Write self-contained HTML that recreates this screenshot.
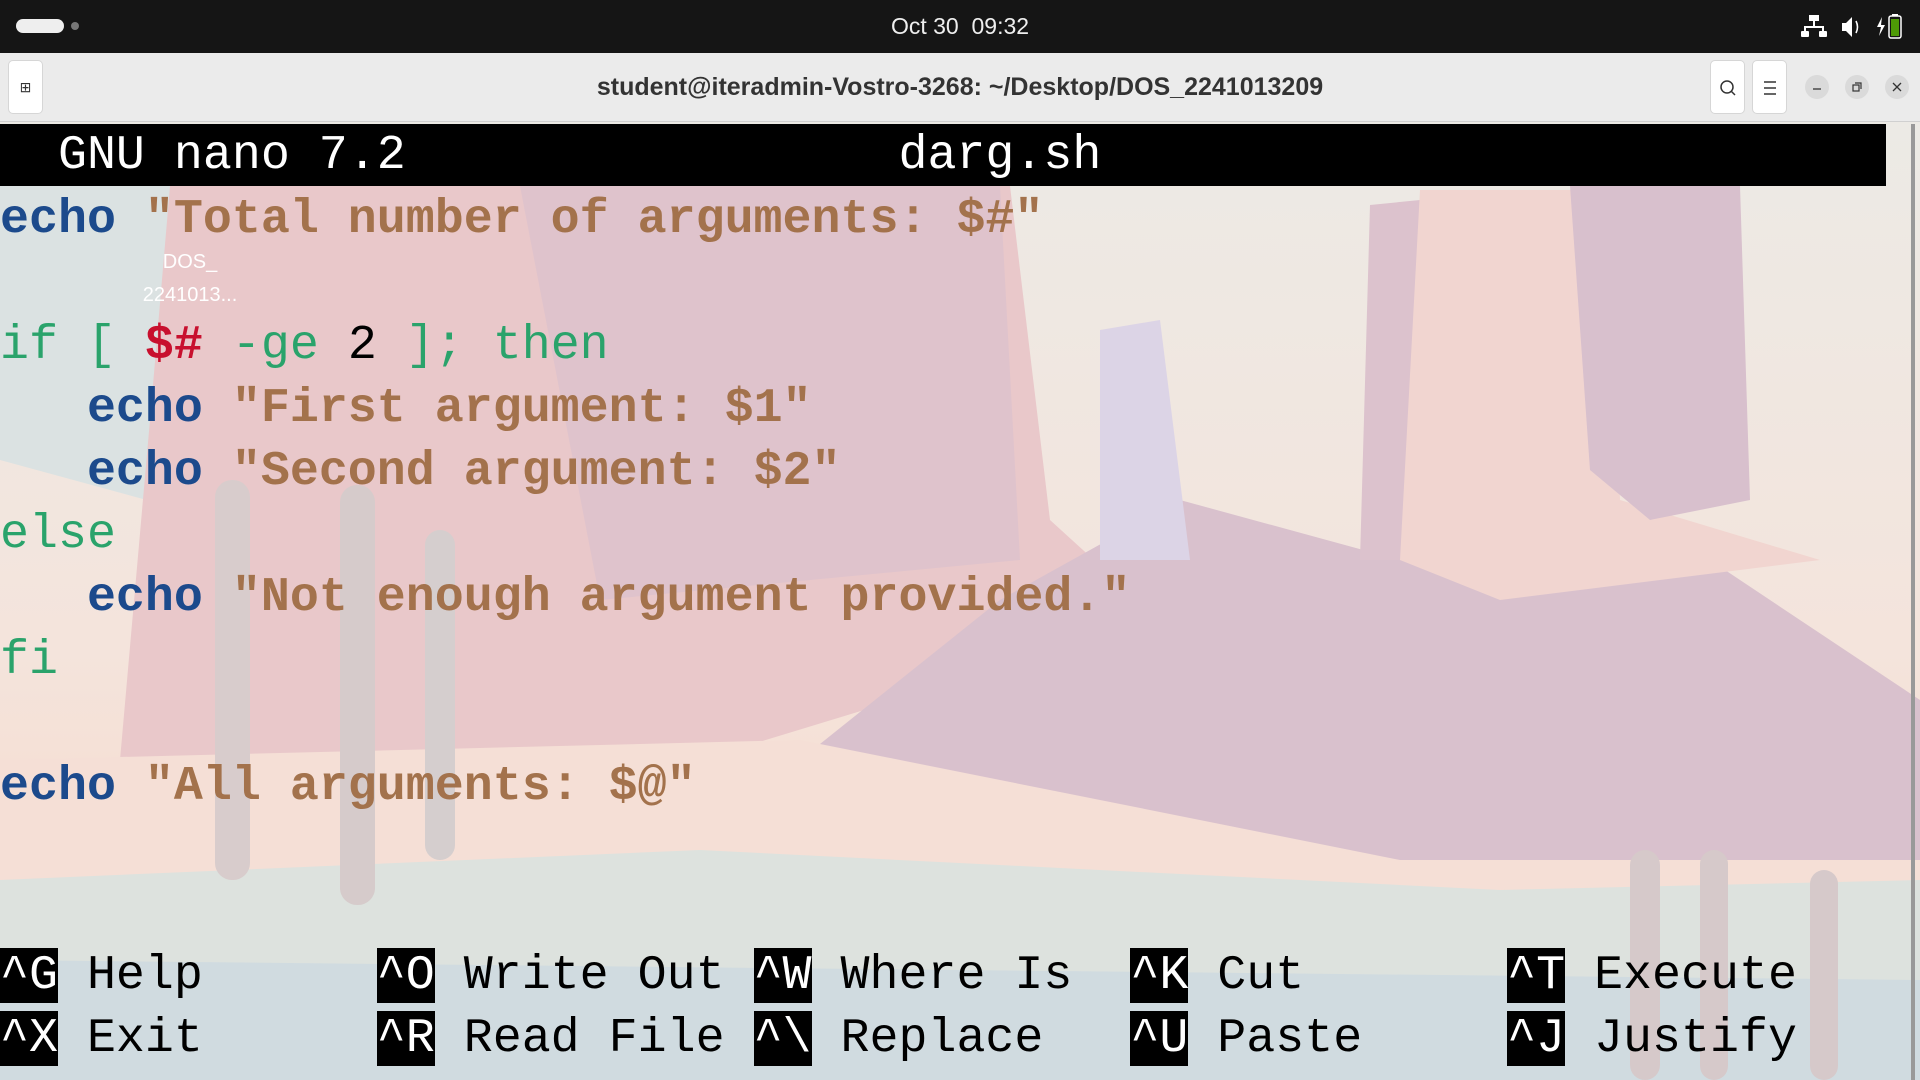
<!DOCTYPE html>
<html><head><meta charset="utf-8"><style>
*{margin:0;padding:0;box-sizing:border-box}
body{width:1920px;height:1080px;overflow:hidden;background:#151515;font-family:"Liberation Sans",sans-serif;position:relative}
#top{position:absolute;left:0;top:0;width:1920px;height:53px;background:#151515;color:#fff}
#hdr{position:absolute;left:0;top:53px;width:1920px;height:69px;background:#ebebeb;border-bottom:1px solid #d0d0d0}
#term{position:absolute;left:0;top:122px;width:1920px;height:958px;overflow:hidden}
.row{position:absolute;left:0;height:63px;line-height:63px;font-family:"Liberation Mono",monospace;font-size:48.3px;white-space:pre;color:#000}
.b{color:#1c4a8c;font-weight:bold}.s{color:#a3724c;font-weight:bold}.g{color:#2aa36b}.r{color:#c8102e;font-weight:bold}
.k{background:#000;color:#fff}
.btn{position:absolute;top:60px;width:35px;height:54px;background:#fff;border:1px solid #d6d6d6;border-radius:5px}
.c{position:absolute;top:75px;width:24px;height:24px;border-radius:12px;background:#dadada}
</style></head><body>
<div id="top">
 <div style="position:absolute;left:16px;top:19px;width:48px;height:14px;border-radius:7px;background:#eee"></div>
 <div style="position:absolute;left:71px;top:22px;width:8px;height:8px;border-radius:4px;background:#777"></div>
 <div style="position:absolute;left:0;width:1920px;top:0;line-height:52px;text-align:center;font-size:23px;color:#eee">Oct 30&nbsp; 09:32</div>
 <svg style="position:absolute;left:1800px;top:12px" width="120" height="30" viewBox="0 0 120 30">
  <g fill="#fff"><rect x="9" y="3" width="10" height="6"/><rect x="13" y="9" width="2" height="6"/><rect x="4" y="14" width="20" height="2"/><rect x="4" y="14" width="2" height="6"/><rect x="22" y="14" width="2" height="6"/><rect x="1" y="19" width="8" height="6" rx="1"/><rect x="19" y="19" width="8" height="6" rx="1"/>
  <path d="M42 11h4l6-6v20l-6-6h-4z"/></g>
  <path d="M56 9q3 6 0 12" stroke="#fff" stroke-width="1.6" fill="none"/>
  <path d="M82 5l-5 10h4l-2 9 6-11h-4z" fill="#fff"/>
  <rect x="89" y="4" width="12" height="22" rx="2" fill="none" stroke="#fff" stroke-width="1.5"/><rect x="91" y="7" width="8" height="17" fill="#4e9a06"/><rect x="92" y="2" width="6" height="2" fill="#fff"/>
 </svg>
</div>
<div id="hdr">
 <div style="position:absolute;left:8px;top:7px;width:35px;height:54px;background:#fff;border:1px solid #d6d6d6;border-radius:5px;font-size:14px;text-align:center;line-height:52px;color:#333">⊞</div>
 <div style="position:absolute;left:0;width:1920px;top:0;line-height:68px;text-align:center;font-size:25px;font-weight:bold;color:#333">student@iteradmin-Vostro-3268: ~/Desktop/DOS_2241013209</div>
</div>
<div class="btn" style="left:1710px"><svg width="35" height="54"><circle cx="16" cy="26" r="6" fill="none" stroke="#333" stroke-width="1.5"/><path d="M20 30l4 4" stroke="#333" stroke-width="1.5"/></svg></div>
<div class="btn" style="left:1752px"><svg width="35" height="54"><path d="M11 21h12M11 27h12M11 33h12" stroke="#333" stroke-width="1.4"/></svg></div>
<div class="c" style="left:1805px"><svg width="24" height="24"><path d="M8 14h8" stroke="#333" stroke-width="1.3"/></svg></div>
<div class="c" style="left:1845px"><svg width="24" height="24"><rect x="8" y="10" width="6" height="6" fill="none" stroke="#333" stroke-width="1.2"/><path d="M10 8h6v6" fill="none" stroke="#333" stroke-width="1.2"/></svg></div>
<div class="c" style="left:1885px"><svg width="24" height="24"><path d="M8 8l8 8M16 8l-8 8" stroke="#333" stroke-width="1.3"/></svg></div>
<div id="term">
 <svg style="position:absolute;left:0;top:0" width="1920" height="958" viewBox="0 122 1920 958">
  <defs><linearGradient id="bg" x1="0" y1="0" x2="0" y2="1"><stop offset="0" stop-color="#eceae5"/><stop offset="0.55" stop-color="#f4e4dc"/><stop offset="0.75" stop-color="#f6ded2"/><stop offset="1" stop-color="#dfe3df"/></linearGradient></defs>
  <rect x="0" y="122" width="1920" height="958" fill="url(#bg)"/>
  <polygon points="0,186 220,186 220,520 0,460" fill="#dbe2e2"/>
  <polygon points="170,186 1010,186 1050,520 1160,620 700,760 120,760 150,420" fill="#e9c8ca"/>
  <polygon points="520,186 1000,186 1020,560 600,600" fill="#dfc3cc"/>
  <polygon points="1000,600 1180,500 1400,560 1650,520 1920,700 1920,860 1100,860 800,760" fill="#d9c1cd"/>
  <polygon points="1370,205 1420,200 1420,560 1360,560" fill="#dcc2cd"/>
  <polygon points="1420,190 1610,190 1620,500 1820,560 1500,600 1400,560" fill="#f1d5d0"/>
  <polygon points="1570,186 1740,186 1750,500 1650,520 1590,470" fill="#d8c0cd"/>
  <polygon points="1100,330 1160,320 1190,560 1100,560" fill="#dcd4e6"/>
  <polygon points="0,760 800,740 1400,860 1920,860 1920,1080 0,1080" fill="#f5dfd6"/>
  <polygon points="0,880 700,850 1500,890 1920,880 1920,1080 0,1080" fill="#dde2de"/>
  <polygon points="0,960 1920,980 1920,1080 0,1080" fill="#d0dbe0"/>
  <rect x="215" y="480" width="35" height="400" rx="17" fill="#d8cccc"/>
  <rect x="340" y="485" width="35" height="420" rx="17" fill="#d6cbcb"/>
  <rect x="425" y="530" width="30" height="330" rx="15" fill="#d5cece"/>
  <rect x="1630" y="850" width="30" height="230" rx="15" fill="#d6c9ca"/>
  <rect x="1700" y="850" width="28" height="230" rx="14" fill="#d6c9ca"/>
  <rect x="1810" y="870" width="28" height="210" rx="14" fill="#d6c9ca"/>
  <rect x="1911" y="124" width="4" height="956" fill="#999"/>
 </svg>
 <div style="position:absolute;left:0;top:2px;width:1886px;height:62px;background:#000"></div>
 <div class="row" style="top:2px;color:#fff">  GNU nano 7.2                 darg.sh</div>
 <div class="row" style="top:66px"><span class="b">echo</span> <span class="s">"Total number of arguments: $#"</span></div>
 <div style="position:absolute;left:130px;top:124px;width:120px;text-align:center;color:#fff;font-size:20px;line-height:33px">DOS_<br>2241013...</div>
 <div class="row" style="top:192px"><span class="g">if [ </span><span class="r">$#</span><span class="g"> -ge </span>2<span class="g"> ]; then</span></div>
 <div class="row" style="top:255px">   <span class="b">echo</span> <span class="s">"First argument: $1"</span></div>
 <div class="row" style="top:318px">   <span class="b">echo</span> <span class="s">"Second argument: $2"</span></div>
 <div class="row" style="top:381px"><span class="g">else</span></div>
 <div class="row" style="top:444px">   <span class="b">echo</span> <span class="s">"Not enough argument provided."</span></div>
 <div class="row" style="top:507px"><span class="g">fi</span></div>
 <div class="row" style="top:633px"><span class="b">echo</span> <span class="s">"All arguments: $@"</span></div>
 <div class="row" style="top:822px"><span class="k">^G</span> Help      <span class="k">^O</span> Write Out <span class="k">^W</span> Where Is  <span class="k">^K</span> Cut       <span class="k">^T</span> Execute</div>
 <div class="row" style="top:885px"><span class="k">^X</span> Exit      <span class="k">^R</span> Read File <span class="k">^\</span> Replace   <span class="k">^U</span> Paste     <span class="k">^J</span> Justify</div>
</div>
</body></html>
